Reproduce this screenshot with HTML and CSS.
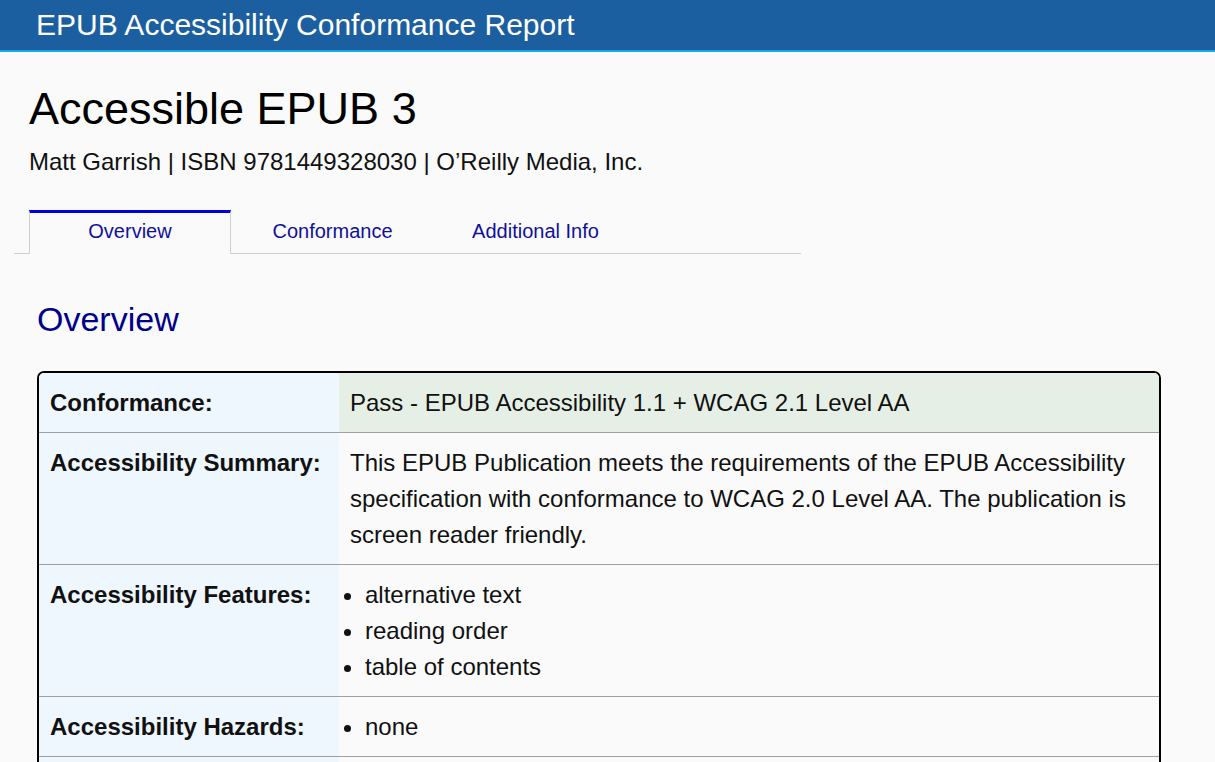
FILE: index.html
```html
<!DOCTYPE html>
<html lang="en">
<head>
<meta charset="utf-8">
<title>EPUB Accessibility Conformance Report</title>
<link rel="stylesheet" href="styles.css">
</head>
<body>
<header class="site-header">EPUB Accessibility Conformance Report</header>
<main class="report">
  <div class="pub-head">
    <h1 class="pub-title">Accessible EPUB 3</h1>
    <p class="pub-meta">Matt Garrish | ISBN 9781449328030 | O’Reilly Media, Inc.</p>
  </div>
  <nav class="tabs">
    <a class="tab tab-active" href="#overview">Overview</a>
    <a class="tab" href="#conformance">Conformance</a>
    <a class="tab" href="#additional">Additional Info</a>
  </nav>
  <section class="panel" id="overview">
    <h2 class="panel-title">Overview</h2>
    <table class="summary">
      <tbody>
        <tr>
          <th>Conformance:</th>
          <td class="pass">Pass - EPUB Accessibility 1.1 + WCAG 2.1 Level AA</td>
        </tr>
        <tr>
          <th>Accessibility Summary:</th>
          <td>This EPUB Publication meets the requirements of the EPUB Accessibility specification with conformance to WCAG 2.0 Level AA. The publication is screen reader friendly.</td>
        </tr>
        <tr>
          <th>Accessibility Features:</th>
          <td>
            <ul class="items">
              <li>alternative text</li>
              <li>reading order</li>
              <li>table of contents</li>
            </ul>
          </td>
        </tr>
        <tr>
          <th>Accessibility Hazards:</th>
          <td>
            <ul class="items">
              <li>none</li>
            </ul>
          </td>
        </tr>
        <tr>
          <th>Access Modes:</th>
          <td>
            <ul class="items">
              <li>textual</li>
              <li>visual</li>
            </ul>
          </td>
        </tr>
      </tbody>
    </table>
  </section>
</main>
</body>
</html>
```

FILE: styles.css
```css
html {
  scrollbar-width: none;
}
html::-webkit-scrollbar {
  display: none;
}
body {
  margin: 0;
  background: #fafafa;
  color: #111;
  font-family: "Liberation Sans", Arial, sans-serif;
  font-size: 24px;
}
.site-header {
  height: 50px;
  line-height: 49px;
  padding: 0 36px;
  background: #1c5fa0;
  border-bottom: 2px solid #1ea8e8;
  color: #fff;
  font-size: 30px;
}
.pub-head {
  padding: 31px 29px 0;
}
.pub-title {
  margin: 0;
  font-size: 45px;
  font-weight: normal;
  line-height: 52px;
  color: #000;
}
.pub-meta {
  margin: 13px 0 0;
  line-height: 28px;
}
.tabs {
  display: flex;
  width: 787px;
  margin: 34px 0 0 14px;
  padding-left: 15px;
  box-sizing: border-box;
  border-bottom: 1px solid #cfcfcf;
}
.tab {
  width: 203px;
  box-sizing: border-box;
  padding: 7px 0 10px;
  text-align: center;
  font-size: 20px;
  line-height: 23px;
  color: #10109a;
  text-decoration: none;
  border-top: 3px solid transparent;
}
.tab-active {
  width: 202px;
  border-top: 3px solid #0000dd;
  border-left: 1px solid #cfcfcf;
  border-right: 1px solid #cfcfcf;
  margin-bottom: -1px;
  padding-bottom: 11px;
  background: #fafafa;
}
.panel {
  padding: 46px 54px 0 37px;
}
.panel-title {
  margin: 0 0 32px;
  font-size: 34px;
  font-weight: normal;
  line-height: 39px;
  color: #00008b;
}
.summary {
  width: 1124px;
  border: 2px solid #000;
  border-radius: 7px;
  border-collapse: separate;
  border-spacing: 0;
  overflow: hidden;
  line-height: 36px;
}
.summary th,
.summary td {
  padding: 12px 11px 11px 11px;
  vertical-align: top;
  text-align: left;
}
.summary th {
  width: 278px;
  background: #eef6fe;
  font-weight: bold;
}
.summary tr + tr th,
.summary tr + tr td {
  border-top: 1px solid #a0a0a0;
}
.summary td.pass {
  background: #e6efe6;
}
.items {
  margin: 0;
  padding-left: 15px;
}
```
